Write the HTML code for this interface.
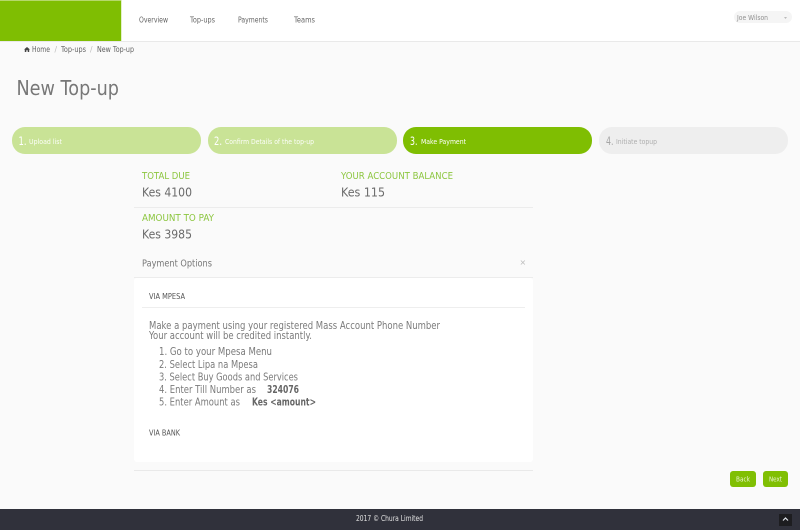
<!DOCTYPE html>
<html>
<head>
<meta charset="utf-8">
<title>New Top-up</title>
<style>
html,body{margin:0;padding:0;background:#fafafa;width:800px;height:530px;overflow:hidden}
svg{display:block;position:absolute;left:0;top:0;filter:blur(.25px)}
text{font-family:"DejaVu Sans","Liberation Sans",sans-serif}
</style>
</head>
<body>
<svg width="800" height="530" viewBox="0 0 800 530" xmlns="http://www.w3.org/2000/svg">
<rect width="800" height="530" fill="#fafafa"/>
<!-- header -->
<rect width="800" height="41" fill="#fff"/>
<rect y="41" width="800" height="1" fill="#e9e9e9"/>
<rect width="121" height="41" fill="#7fbe02"/>
<rect width="121" height="1" fill="#b5d86b"/>
<rect x="121" width="1" height="41" fill="#e3f0c8"/>
<g font-size="7.500" fill="#666">
<text x="139" y="22.500" textLength="29" lengthAdjust="spacingAndGlyphs">Overview</text>
<text x="190" y="22.500" textLength="25" lengthAdjust="spacingAndGlyphs">Top-ups</text>
<text x="238" y="22.500" textLength="30" lengthAdjust="spacingAndGlyphs">Payments</text>
<text x="294" y="22.500" textLength="21" lengthAdjust="spacingAndGlyphs">Teams</text>
</g>
<rect x="734" y="11" width="58" height="12" rx="6" fill="#f5f5f5"/>
<text x="737" y="20" font-size="7" fill="#8f8f8f" textLength="31" lengthAdjust="spacingAndGlyphs">Joe Wilson</text>
<path d="M784 17h3l-1.500 2z" fill="#bbb"/>
<!-- breadcrumb -->
<path d="M24 49.500l3-2.500 3 2.500h-.8v2.500h-1.500v-1.700h-1.400v1.700h-1.500v-2.500z" fill="#444"/>
<g font-size="7.500" fill="#626262">
<text x="32" y="52" textLength="18" lengthAdjust="spacingAndGlyphs">Home</text>
<text x="61" y="52" textLength="25" lengthAdjust="spacingAndGlyphs">Top-ups</text>
<text x="97" y="52" textLength="37" lengthAdjust="spacingAndGlyphs">New Top-up</text>
<text x="54.500" y="52" fill="#bbb">/</text>
<text x="90" y="52" fill="#bbb">/</text>
</g>
<text x="16.500" y="95" font-size="20" fill="#777" textLength="102.500" lengthAdjust="spacingAndGlyphs">New Top-up</text>
<!-- steps -->
<rect x="12" y="127" width="189" height="27" rx="13" fill="#c9e396"/>
<rect x="208" y="127" width="189" height="27" rx="13" fill="#c9e396"/>
<rect x="403" y="127" width="189" height="27" rx="13" fill="#7fbe02"/>
<rect x="599" y="127" width="189" height="27" rx="13" fill="#eeeeee"/>
<g fill="#fff">
<text x="18.500" y="145" font-size="11.500" textLength="8" lengthAdjust="spacingAndGlyphs">1.</text>
<text x="29" y="144" font-size="7" opacity=".95" textLength="33" lengthAdjust="spacingAndGlyphs">Upload list</text>
<text x="214" y="145" font-size="11.500" textLength="8" lengthAdjust="spacingAndGlyphs">2.</text>
<text x="225" y="144" font-size="7" opacity=".95" textLength="89" lengthAdjust="spacingAndGlyphs">Confirm Details of the top-up</text>
<text x="410" y="145" font-size="11.500" textLength="7.500" lengthAdjust="spacingAndGlyphs">3.</text>
<text x="421" y="144" font-size="7" textLength="45" lengthAdjust="spacingAndGlyphs">Make Payment</text>
</g>
<text x="606" y="145" font-size="11.500" fill="#a5a5a5" textLength="7.500" lengthAdjust="spacingAndGlyphs">4.</text>
<text x="616" y="144" font-size="7" fill="#aeaeae" textLength="41" lengthAdjust="spacingAndGlyphs">Initiate topup</text>
<!-- totals -->
<g font-size="10" fill="#8cc63f">
<text x="142" y="179" textLength="48" lengthAdjust="spacingAndGlyphs">TOTAL DUE</text>
<text x="341" y="179" textLength="112" lengthAdjust="spacingAndGlyphs">YOUR ACCOUNT BALANCE</text>
<text x="142" y="221" textLength="72" lengthAdjust="spacingAndGlyphs">AMOUNT TO PAY</text>
</g>
<g font-size="12" fill="#6b6b6b">
<text x="142" y="196.500" textLength="50" lengthAdjust="spacingAndGlyphs">Kes 4100</text>
<text x="341" y="196.500" textLength="44" lengthAdjust="spacingAndGlyphs">Kes 115</text>
<text x="142" y="238.500" textLength="50" lengthAdjust="spacingAndGlyphs">Kes 3985</text>
</g>
<rect x="134" y="207" width="399" height="1" fill="#ececec"/>
<!-- payment options -->
<text x="142" y="266.500" font-size="10" fill="#777" textLength="70" lengthAdjust="spacingAndGlyphs">Payment Options</text>
<text x="519.500" y="265" font-size="8" fill="#bbb">×</text>
<rect x="134" y="277" width="399" height="1" fill="#ececec"/>
<rect x="134" y="278" width="399" height="184" rx="3" fill="#fff"/>
<text x="149" y="299" font-size="7.500" fill="#555" textLength="36" lengthAdjust="spacingAndGlyphs">VIA MPESA</text>
<rect x="142" y="307" width="383" height="1" fill="#eeeeee"/>
<g font-size="10.500" fill="#7b7b7b">
<text x="149" y="329" textLength="291" lengthAdjust="spacingAndGlyphs">Make a payment using your registered Mass Account Phone Number</text>
<text x="149" y="339" textLength="163" lengthAdjust="spacingAndGlyphs">Your account will be credited instantly.</text>
<text x="159" y="355" textLength="113" lengthAdjust="spacingAndGlyphs">1. Go to your Mpesa Menu</text>
<text x="159" y="368" textLength="99" lengthAdjust="spacingAndGlyphs">2. Select Lipa na Mpesa</text>
<text x="159" y="380.500" textLength="139" lengthAdjust="spacingAndGlyphs">3. Select Buy Goods and Services</text>
<text x="159" y="393" textLength="97" lengthAdjust="spacingAndGlyphs">4. Enter Till Number as</text>
<text x="159" y="405.500" textLength="81" lengthAdjust="spacingAndGlyphs">5. Enter Amount as</text>
</g>
<g font-size="10.500" fill="#666" font-weight="bold">
<text x="267" y="393" textLength="32" lengthAdjust="spacingAndGlyphs">324076</text>
<text x="252" y="405.500" textLength="64" lengthAdjust="spacingAndGlyphs">Kes &lt;amount&gt;</text>
</g>
<text x="149" y="435.500" font-size="7.500" fill="#555" textLength="31" lengthAdjust="spacingAndGlyphs">VIA BANK</text>
<rect x="134" y="470" width="399" height="1" fill="#e9e9e9"/>
<!-- buttons -->
<rect x="730" y="471" width="26" height="16" rx="3" fill="#80bf03"/>
<rect x="763" y="471" width="25" height="16" rx="3" fill="#80bf03"/>
<g font-size="7" fill="#eaf5d0">
<text x="736" y="481.500" textLength="14" lengthAdjust="spacingAndGlyphs">Back</text>
<text x="769" y="481.500" textLength="13" lengthAdjust="spacingAndGlyphs">Next</text>
</g>
<!-- footer -->
<rect y="509" width="800" height="21" fill="#30313b"/>
<text x="356" y="521" font-size="7.500" fill="#e2e2e2" textLength="67" lengthAdjust="spacingAndGlyphs">2017 © Chura Limited</text>
<rect x="779" y="514" width="13" height="12" fill="#1d1d20"/>
<path d="M783 520.500l2.500-2.500 2.500 2.500" fill="none" stroke="#dfe3ea" stroke-width="1.200"/>
</svg>
</body>
</html>
